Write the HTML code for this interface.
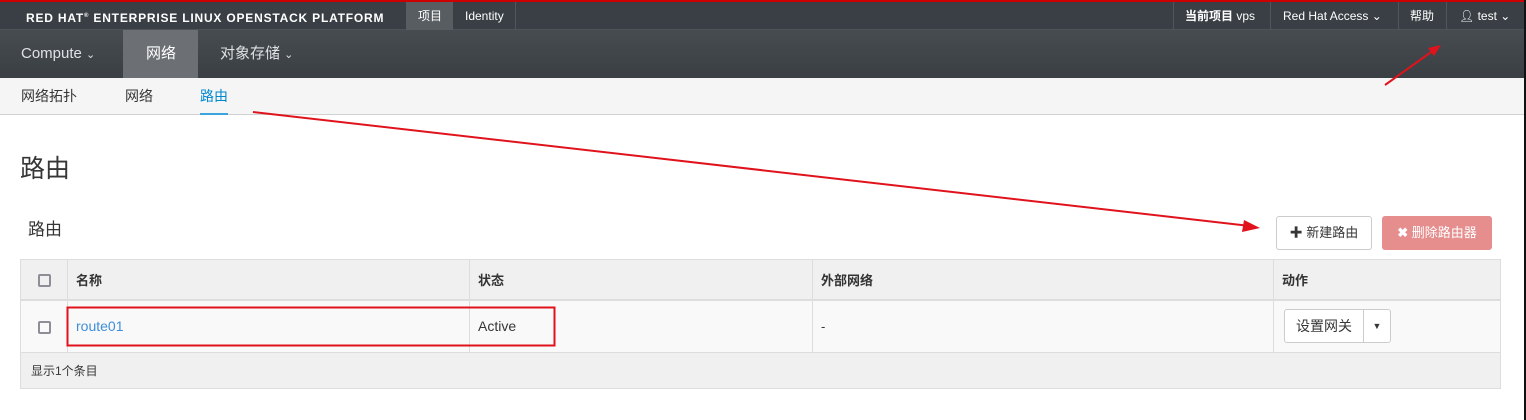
<!DOCTYPE html>
<html><head><meta charset="utf-8"><style>
*{box-sizing:border-box;margin:0;padding:0}
body{width:1526px;height:420px;overflow:hidden;background:#fff;font-family:"Liberation Sans","Noto Sans CJK SC",sans-serif;font-size:13px;color:#363636;position:relative}
.a{position:absolute}
.top{left:0;top:0;width:1526px;height:30px;background:#393f44;border-top:2px solid #c00;border-bottom:1px solid #4c5257}
.top .t{position:absolute;top:0;height:28px;line-height:28px;color:#fff;font-size:12px}
.sep{position:absolute;top:0;width:1px;height:28px;background:#50565b}
.nav{left:0;top:30px;width:1526px;height:48px;background:linear-gradient(#474c50,#3a3f43)}
.nav .t{position:absolute;top:0;height:48px;line-height:48px;color:#dfe1e2;font-size:15px}
.sub{left:0;top:78px;width:1526px;height:37px;background:#f5f5f5;border-bottom:1px solid #d1d1d1}
.sub .t{position:absolute;top:0;line-height:36px;font-size:14px;color:#363636}
table{position:absolute;left:20px;top:259px;width:1481px;border-collapse:collapse}
td,th{border:1px solid #ddd;text-align:left;padding:0 8px;font-size:13px}
th{background:#f0f0f0;height:40px;border-bottom:2px solid #ddd;font-weight:bold;color:#333}
.cb{display:inline-block;width:13px;height:13px;border:2px solid #8e8e96;border-radius:2px;vertical-align:middle}
</style></head><body>
<div class="a top">
<div class="t" style="left:26px;font-weight:bold;font-size:12px;letter-spacing:0.8px">RED HAT<sup style="font-size:6px">®</sup> ENTERPRISE LINUX OPENSTACK PLATFORM</div>
<div class="a" style="left:406px;top:0;width:47px;height:28px;background:#585d62"></div>
<div class="t" style="left:418px">项目</div>
<div class="t" style="left:465px">Identity</div>
<div class="sep" style="left:515px"></div>
<div class="sep" style="left:1173px"></div>
<div class="t" style="left:1185px"><b>当前项目</b> vps</div>
<div class="sep" style="left:1270px"></div>
<div class="t" style="left:1283px">Red Hat Access ⌄</div>
<div class="sep" style="left:1398px"></div>
<div class="t" style="left:1410px">帮助</div>
<div class="sep" style="left:1446px"></div>
<div class="t" style="left:1459px">👤︎ test ⌄</div>
</div>
<div class="a nav">
<div class="t" style="left:21px">Compute <span style="font-size:11px">⌄</span></div>
<div class="a" style="left:123px;top:0;width:75px;height:48px;background:#6c7074"></div>
<div class="t" style="left:146px;color:#fff">网络</div>
<div class="t" style="left:220px">对象存储 <span style="font-size:11px">⌄</span></div>
</div>
<div class="a sub">
<div class="t" style="left:21px">网络拓扑</div>
<div class="t" style="left:125px">网络</div>
<div class="t" style="left:200px;color:#0088ce;border-bottom:2px solid #39a5dc;height:37px">路由</div>
</div>
<div class="a" style="left:20px;top:149px;font-size:25px">路由</div>
<div class="a" style="left:28px;top:215px;font-size:17px">路由</div>
<div class="a" style="left:1276px;top:216px;width:96px;height:34px;border:1px solid #ccc;border-radius:3px;line-height:32px;text-align:center;font-size:13px"><b>✚</b> 新建路由</div>
<div class="a" style="left:1382px;top:216px;width:110px;height:34px;background:#e68d8d;border-radius:3px;line-height:34px;text-align:center;color:#fff;font-size:13px"><b>✖</b> 删除路由器</div>
<table>
<tr><th style="width:47px;text-align:center"><span class="cb"></span></th><th style="width:402px">名称</th><th style="width:343px">状态</th><th style="width:461px">外部网络</th><th>动作</th></tr>
<tr style="height:53px;background:#f9f9f9"><td style="text-align:center"><span class="cb"></span></td><td style="color:#3f8ed6;font-size:14px">route01</td><td style="font-size:14px">Active</td><td>-</td><td style="padding-left:10px"><div style="display:inline-flex;border:1px solid #ccc;border-radius:3px;height:34px;background:#fff"><span style="padding:0 11px;line-height:32px;border-right:1px solid #ccc;font-size:14px">设置网关</span><span style="width:26px;text-align:center;line-height:32px;font-size:9px">▼</span></div></td></tr>
<tr style="height:36px;background:#f0f0f0"><td colspan="5" style="font-size:12px;padding-left:10px">显示1个条目</td></tr>
</table>
<div class="a" style="left:1524px;top:0;width:2px;height:420px;background:#111"></div>
<svg class="a" style="left:0;top:0" width="1526" height="420">
<rect x="67.5" y="307.5" width="487" height="38" fill="none" stroke="#e0121b" stroke-width="2"/>
<line x1="253" y1="112" x2="1250" y2="226" stroke="#e0121b" stroke-width="2"/>
<polygon points="1260,228 1244,220 1242,232" fill="#e0121b"/>
<line x1="1385" y1="85" x2="1434" y2="50" stroke="#e0121b" stroke-width="2"/>
<polygon points="1441,45 1428,48 1434,56" fill="#e0121b"/>
</svg>
</body></html>
